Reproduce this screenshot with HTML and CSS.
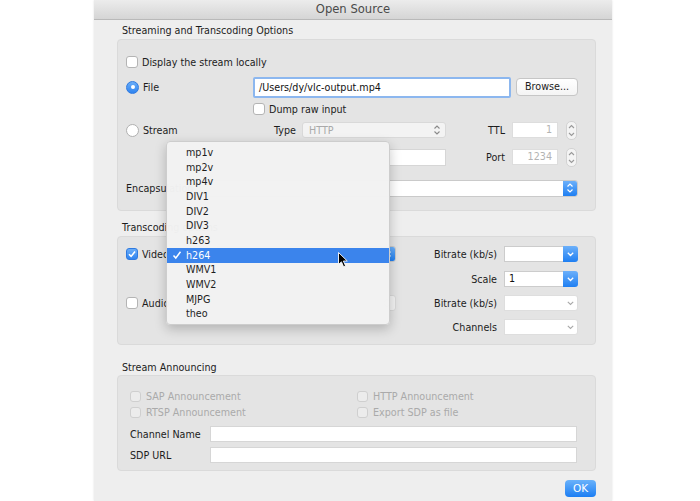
FILE: index.html
```html
<!DOCTYPE html>
<html lang="en">
<head>
    <meta charset="UTF-8">
    <title>Open Source</title>
    <link rel="stylesheet" href="styles.css">
</head>
<body>
    <div class="window">
        <div class="titlebar">Open Source</div>
        <div class="content">
            <div class="group-title gt-stream">Streaming and Transcoding Options</div>
            <div class="box box-stream">
                <div class="row">
                    <span class="check"></span><span>Display the stream locally</span>
                </div>
                <div class="row r-file">
                    <div class="choice"><span class="radio on"></span><span>File</span></div>
                    <div class="filefield">/Users/dy/vlc-output.mp4</div>
                    <div class="button">Browse...</div>
                </div>
                <div class="row r-dump">
                    <div class="choice"></div>
                    <span class="check"></span><span>Dump raw input</span>
                </div>
                <div class="row r-stream">
                    <div class="choice"><span class="radio"></span><span>Stream</span></div>
                    <span class="lbl lbl-type">Type</span>
                    <div class="popup dim">
                        <span class="popup-text">HTTP</span>
                        <svg class="updown" width="8" height="12" viewBox="0 0 8 12"><path d="M1.5 4.5 L4 2 L6.5 4.5 M1.5 7.5 L4 10 L6.5 7.5" fill="none" stroke="#8a8a8a" stroke-width="1.1"/></svg>
                    </div>
                    <span class="lbl lbl-num">TTL</span>
                    <div class="numfield">1</div>
                    <span class="stepper"><svg width="9" height="17" viewBox="0 0 9 17"><path d="M2 6 L4.5 3.5 L7 6 M2 11 L4.5 13.5 L7 11" fill="none" stroke="#9a9a9a" stroke-width="1.1"/></svg></span>
                </div>
                <div class="row r-port">
                    <div class="port-spacer"></div>
                    <div class="textfield port-host"></div>
                    <span class="lbl lbl-num">Port</span>
                    <div class="numfield">1234</div>
                    <span class="stepper"><svg width="9" height="17" viewBox="0 0 9 17"><path d="M2 6 L4.5 3.5 L7 6 M2 11 L4.5 13.5 L7 11" fill="none" stroke="#9a9a9a" stroke-width="1.1"/></svg></span>
                </div>
                <div class="row r-encap">
                    <span class="lbl-encap">Encapsulation</span>
                    <div class="popup wide">
                        <span class="popup-text"></span>
                        <span class="blue-btn"><svg width="8" height="12" viewBox="0 0 8 12"><path d="M1.5 4.5 L4 2 L6.5 4.5 M1.5 7.5 L4 10 L6.5 7.5" fill="none" stroke="#fff" stroke-width="1.2"/></svg></span>
                    </div>
                </div>
            </div>

            <div class="group-title gt-trans">Transcoding options</div>
            <div class="box box-trans">
                <div class="row">
                    <div class="tc-left">
                        <span class="check on"><svg width="10" height="10" viewBox="0 0 10 10"><path d="M2 5.2 L4.1 7.4 L8 2.6" fill="none" stroke="#fff" stroke-width="1.6"/></svg></span>
                        <span class="tc-label">Video</span>
                        <div class="popup codec">
                            <span class="popup-text"></span>
                            <span class="blue-btn"><svg width="8" height="12" viewBox="0 0 8 12"><path d="M1.5 4.5 L4 2 L6.5 4.5 M1.5 7.5 L4 10 L6.5 7.5" fill="none" stroke="#fff" stroke-width="1.2"/></svg></span>
                        </div>
                    </div>
                    <span class="lbl lbl-rate">Bitrate (kb/s)</span>
                    <div class="combo">
                        <span class="combo-text"></span>
                        <span class="combo-btn"><svg width="9" height="8" viewBox="0 0 9 8"><path d="M1.8 2.8 L4.5 5.5 L7.2 2.8" fill="none" stroke="#fff" stroke-width="1.3"/></svg></span>
                    </div>
                </div>
                <div class="row r-scale">
                    <div class="tc-left"></div>
                    <span class="lbl lbl-rate">Scale</span>
                    <div class="combo">
                        <span class="combo-text">1</span>
                        <span class="combo-btn"><svg width="9" height="8" viewBox="0 0 9 8"><path d="M1.8 2.8 L4.5 5.5 L7.2 2.8" fill="none" stroke="#fff" stroke-width="1.3"/></svg></span>
                    </div>
                </div>
                <div class="row r-audio">
                    <div class="tc-left">
                        <span class="check"></span>
                        <span class="tc-label">Audio</span>
                        <div class="popup codec dim">
                            <span class="popup-text"></span>
                            <svg class="updown" width="8" height="12" viewBox="0 0 8 12"><path d="M1.5 4.5 L4 2 L6.5 4.5 M1.5 7.5 L4 10 L6.5 7.5" fill="none" stroke="#b0b0b0" stroke-width="1.1"/></svg>
                        </div>
                    </div>
                    <span class="lbl lbl-rate">Bitrate (kb/s)</span>
                    <div class="combo off">
                        <span class="combo-text"></span>
                        <span class="combo-btn"><svg width="9" height="8" viewBox="0 0 9 8"><path d="M1.8 2.8 L4.5 5.5 L7.2 2.8" fill="none" stroke="#a8a8a8" stroke-width="1.1"/></svg></span>
                    </div>
                </div>
                <div class="row r-channels">
                    <div class="tc-left"></div>
                    <span class="lbl lbl-rate">Channels</span>
                    <div class="combo off">
                        <span class="combo-text"></span>
                        <span class="combo-btn"><svg width="9" height="8" viewBox="0 0 9 8"><path d="M1.8 2.8 L4.5 5.5 L7.2 2.8" fill="none" stroke="#a8a8a8" stroke-width="1.1"/></svg></span>
                    </div>
                </div>
            </div>

            <div class="group-title gt-announce">Stream Announcing</div>
            <div class="box box-announce">
                <div class="row r-sap">
                    <div class="ann-col"><span class="check small"></span><span class="disabled">SAP Announcement</span></div>
                    <span class="check small"></span><span class="disabled">HTTP Announcement</span>
                </div>
                <div class="row r-rtsp">
                    <div class="ann-col"><span class="check small"></span><span class="disabled">RTSP Announcement</span></div>
                    <span class="check small"></span><span class="disabled">Export SDP as file</span>
                </div>
                <div class="row r-chan">
                    <span class="ann-label">Channel Name</span>
                    <div class="textfield grow"></div>
                </div>
                <div class="row r-sdp">
                    <span class="ann-label">SDP URL</span>
                    <div class="textfield grow"></div>
                </div>
            </div>

            <div class="footer">
                <div class="ok">OK</div>
            </div>
        </div>

        <div class="menu">
            <div class="menu-item"><span class="tick"></span>mp1v</div>
            <div class="menu-item"><span class="tick"></span>mp2v</div>
            <div class="menu-item"><span class="tick"></span>mp4v</div>
            <div class="menu-item"><span class="tick"></span>DIV1</div>
            <div class="menu-item"><span class="tick"></span>DIV2</div>
            <div class="menu-item"><span class="tick"></span>DIV3</div>
            <div class="menu-item"><span class="tick"></span>h263</div>
            <div class="menu-item sel"><span class="tick"><svg width="10" height="10" viewBox="0 0 10 10"><path d="M1.5 5.4 L3.8 8 L8.5 1.8" fill="none" stroke="#fff" stroke-width="1.5"/></svg></span>h264</div>
            <div class="menu-item"><span class="tick"></span>WMV1</div>
            <div class="menu-item"><span class="tick"></span>WMV2</div>
            <div class="menu-item"><span class="tick"></span>MJPG</div>
            <div class="menu-item"><span class="tick"></span>theo</div>
        </div>

        <svg class="cursor" width="11" height="16" viewBox="0 0 11 16"><path d="M0.5 0.5 L0.5 12.5 L3.4 9.8 L5.6 14.8 L7.6 13.9 L5.4 9 L9.3 9 Z" fill="#000" stroke="#fff" stroke-width="0.9"/></svg>
    </div>
</body>
</html>
```

FILE: styles.css
```css
body {
    margin: 0;
    background: #ffffff;
    font-family: "DejaVu Sans", sans-serif;
    font-size: 9.6px;
    color: #1c1c1c;
}
.window {
    position: relative;
    margin-left: 94px;
    width: 518px;
    height: 501px;
    background: #eeeeee;
    box-shadow: 0 0 2px rgba(0, 0, 0, 0.12);
}
.titlebar {
    height: 19px;
    line-height: 19px;
    text-align: center;
    font-size: 11.6px;
    color: #4a4a4a;
    background: linear-gradient(#ececec, #d5d5d5);
    border-bottom: 1px solid #b9b9b9;
}
.content {
    padding: 0 16px 0 23px;
}
.group-title {
    height: 14px;
    line-height: 14px;
    margin-left: 5px;
    white-space: nowrap;
}
.gt-stream { margin-top: 4px; margin-bottom: 1px; }
.gt-trans { margin-top: 10px; margin-bottom: 1px; }
.gt-announce { margin-top: 16px; }

.box {
    box-sizing: border-box;
    background: #e4e4e4;
    border: 1px solid #dadada;
    border-radius: 4px;
    padding-left: 8px;
    padding-right: 17px;
}
.box-stream { height: 172px; padding-top: 13px; }
.box-trans { height: 109px; padding-top: 8px; }
.box-announce { height: 96px; padding-top: 13px; padding-left: 12px; padding-right: 18px; }

.row {
    display: flex;
    align-items: center;
    height: 18px;
    white-space: nowrap;
}
.r-file { height: 22px; margin-top: 5px; }
.r-dump { margin-top: 2px; }
.r-stream { margin-top: 3px; }
.r-port { margin-top: 9px; }
.r-encap { margin-top: 13px; }
.r-scale { margin-top: 7px; }
.r-audio { margin-top: 6px; }
.r-channels { margin-top: 6px; }
.r-sap { height: 14px; }
.r-rtsp { height: 14px; margin-top: 2px; }
.r-chan { height: 16px; margin-top: 7px; }
.r-sdp { height: 16px; margin-top: 5px; }

.check {
    box-sizing: border-box;
    width: 12px;
    height: 12px;
    flex: none;
    margin-right: 4px;
    background: #ffffff;
    border: 1px solid #b4b4b4;
    border-radius: 3px;
    display: flex;
    align-items: center;
    justify-content: center;
}
.check.on {
    background: linear-gradient(#6aadf8, #2f84f0);
    border-color: #2f7ae0;
}
.check.small {
    width: 11px;
    height: 11px;
    margin-right: 5px;
    background: #ececec;
    border-color: #cfcfcf;
}
.radio {
    box-sizing: border-box;
    width: 13px;
    height: 13px;
    margin-right: 4px;
    border-radius: 50%;
    background: #ffffff;
    border: 1px solid #b0b0b0;
    position: relative;
}
.radio.on {
    background: linear-gradient(#6aadf8, #2f84f0);
    border-color: #2f7ae0;
}
.radio.on::after {
    content: "";
    position: absolute;
    left: 3.5px;
    top: 3.5px;
    width: 4px;
    height: 4px;
    border-radius: 50%;
    background: #ffffff;
}
.choice {
    width: 127px;
    display: flex;
    align-items: center;
    flex: none;
}
.filefield {
    box-sizing: border-box;
    width: 258px;
    height: 21px;
    line-height: 17px;
    padding-left: 4px;
    background: #ffffff;
    border: 2px solid #8cb7ef;
    border-radius: 2px;
    color: #111111;
}
.button {
    box-sizing: border-box;
    width: 62px;
    height: 18px;
    line-height: 16px;
    margin-left: 5px;
    text-align: center;
    background: linear-gradient(#ffffff, #f4f4f4);
    border: 1px solid #c6c6c6;
    border-radius: 4px;
}
.lbl { flex: none; }
.lbl-type {
    width: 43px;
    margin-right: 6px;
    text-align: right;
}
.lbl-num {
    width: 59px;
    margin-right: 7px;
    text-align: right;
}
.popup {
    box-sizing: border-box;
    display: flex;
    align-items: center;
    height: 16px;
    width: 144px;
    background: #ffffff;
    border: 1px solid #cacaca;
    border-radius: 3px;
    overflow: hidden;
}
.popup.dim {
    background: #f3f3f3;
    border-color: #d9d9d9;
    color: #a9a9a9;
}
.popup-text {
    flex: 1;
    padding-left: 6px;
}
.updown { margin-right: 4px; }
.blue-btn {
    width: 14px;
    align-self: stretch;
    display: flex;
    align-items: center;
    justify-content: center;
    background: linear-gradient(#6cb0fa, #1f7ff2);
}
.popup.wide { flex: 1; height: 17px; }
.popup.codec { flex: 1; }
.numfield {
    box-sizing: border-box;
    width: 46px;
    height: 16px;
    line-height: 14px;
    padding-right: 5px;
    text-align: right;
    color: #b3b3b3;
    background: #ffffff;
    border: 1px solid #dddddd;
}
.stepper {
    box-sizing: border-box;
    width: 11px;
    height: 19px;
    margin-left: 8px;
    display: flex;
    align-items: center;
    justify-content: center;
    background: #f4f4f4;
    border: 1px solid #d2d2d2;
    border-radius: 5px;
}
.port-spacer { width: 176px; flex: none; }
.textfield {
    box-sizing: border-box;
    height: 16px;
    background: #ffffff;
    border: 1px solid #d6d6d6;
}
.port-host { width: 144px; height: 17px; }
.lbl-encap { width: 74px; flex: none; }

.tc-left {
    width: 270px;
    flex: none;
    display: flex;
    align-items: center;
}
.tc-label { width: 73px; }
.lbl-rate {
    flex: 1;
    margin-right: 7px;
    text-align: right;
}
.combo {
    display: flex;
    width: 74px;
    height: 16px;
}
.combo-text {
    box-sizing: border-box;
    flex: 1;
    padding-left: 4px;
    line-height: 14px;
    background: #ffffff;
    border: 1px solid #cccccc;
    border-right: none;
    color: #111111;
}
.combo-btn {
    width: 15px;
    display: flex;
    align-items: center;
    justify-content: center;
    background: linear-gradient(#6cb0fa, #1f7ff2);
    border-radius: 0 3px 3px 0;
}
.combo.off .combo-text { border-color: #dedede; }
.combo.off .combo-btn {
    box-sizing: border-box;
    background: #ffffff;
    border: 1px solid #dedede;
    border-left: none;
}

.ann-col {
    width: 227px;
    flex: none;
    display: flex;
    align-items: center;
}
.disabled { color: #aaaaaa; }
.ann-label { width: 80px; flex: none; }
.grow { flex: 1; }

.footer {
    display: flex;
    justify-content: flex-end;
    margin-top: 9px;
}
.ok {
    width: 31px;
    height: 17px;
    line-height: 17px;
    text-align: center;
    color: #ffffff;
    font-size: 10.5px;
    background: linear-gradient(#6ab2fb, #1c7ef3);
    border-radius: 4px;
}

.menu {
    position: absolute;
    left: 72px;
    top: 141px;
    box-sizing: border-box;
    width: 224px;
    height: 184px;
    padding-top: 3px;
    background: rgba(242, 242, 242, 0.98);
    border: 1px solid #cdcdcd;
    border-radius: 4px;
    box-shadow: 0 4px 12px rgba(0, 0, 0, 0.22);
}
.menu-item {
    display: flex;
    align-items: center;
    height: 14.7px;
    padding-left: 5px;
    color: #1e1e1e;
}
.menu-item.sel {
    background: #3b84ec;
    color: #ffffff;
}
.tick {
    width: 14px;
    display: flex;
    align-items: center;
}
.cursor {
    position: absolute;
    left: 244px;
    top: 252px;
}
```
